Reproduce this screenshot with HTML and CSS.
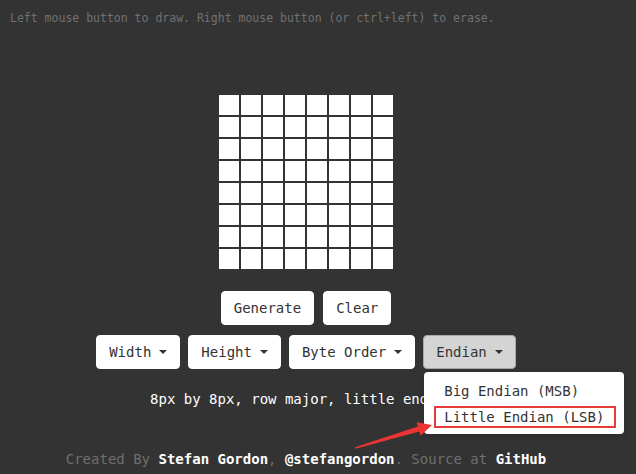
FILE: index.html
```html
<!DOCTYPE html>
<html>
<head>
<meta charset="utf-8">
<link rel="stylesheet" href="styles.css">
</head>
<body>
<p class="hint">Left mouse button to draw. Right mouse button (or ctrl+left) to erase.</p>
<main class="app">
  <div class="grid" id="grid"></div>
  <div class="row row-actions">
    <button class="btn">Generate</button>
    <button class="btn">Clear</button>
  </div>
  <div class="row row-options">
    <button class="btn">Width<span class="caret"></span></button>
    <button class="btn">Height<span class="caret"></span></button>
    <button class="btn">Byte Order<span class="caret"></span></button>
    <div class="dropdown">
      <button class="btn btn-open">Endian<span class="caret"></span></button>
      <ul class="menu">
        <li class="menu-item">Big Endian (MSB)</li>
        <li class="menu-item menu-item-marked">Little Endian (LSB)</li>
      </ul>
    </div>
  </div>
  <p class="info">8px by 8px, row major, little endian.</p>
  <p class="footer">Created By <a class="link">Stefan Gordon</a>, <a class="link">@stefangordon</a>. Source at <a class="link">GitHub</a></p>
</main>
<svg class="arrow" width="636" height="474" viewBox="0 0 636 474">
  <polygon points="355,447.3 355.6,448.7 419.3,431.4 420.6,435.7 432,425 416.6,422.3 417.9,426.6" fill="#ec3434"/>
</svg>
<script>
  var g = document.getElementById('grid');
  for (var i = 0; i < 64; i++) { var c = document.createElement('div'); c.className = 'cell'; g.appendChild(c); }
</script>
</body>
</html>
```
FILE: styles.css
```css
html, body {
  margin: 0;
  padding: 0;
  background: #333333;
  font-family: "DejaVu Sans Mono", "Liberation Mono", monospace;
}

body {
  position: relative;
  width: 636px;
  height: 474px;
  overflow: hidden;
}

.hint {
  margin: 0;
  padding: 11px 10px 0;
  font-size: 11.5px;
  line-height: 14px;
  color: #717171;
}

.app {
  width: 612px;
  display: flex;
  flex-direction: column;
  align-items: center;
}

.grid {
  margin-top: 70px;
  display: grid;
  grid-template-columns: repeat(8, 20px);
  grid-auto-rows: 20px;
  gap: 2px;
}

.cell {
  background: #ffffff;
}

.row {
  display: flex;
  gap: 8px;
}

.row-actions {
  margin-top: 22px;
  gap: 9px;
}

.row-options {
  margin-top: 10px;
}

.btn {
  height: 34px;
  padding: 0 12px;
  border: 1px solid #ffffff;
  border-radius: 4px;
  background: #ffffff;
  color: #333333;
  font-family: "DejaVu Sans Mono", "Liberation Mono", monospace;
  font-size: 14px;
  display: flex;
  align-items: center;
}

.btn-open {
  background: #d4d4d4;
  border-color: #a9a9a9;
}

.caret {
  width: 0;
  height: 0;
  margin-left: 8px;
  border-top: 4px solid #333333;
  border-left: 4px solid transparent;
  border-right: 4px solid transparent;
}

.dropdown {
  position: relative;
}

.menu {
  position: absolute;
  top: 37px;
  left: 1px;
  width: 200px;
  height: 62px;
  box-sizing: border-box;
  margin: 0;
  padding: 6px 0 0;
  list-style: none;
  background: #ffffff;
  border-radius: 4px;
  box-shadow: 0 2px 6px rgba(0, 0, 0, 0.2);
  z-index: 2;
}

.menu-item {
  height: 26px;
  line-height: 26px;
  padding-left: 20px;
  font-size: 14px;
  color: #333333;
  white-space: nowrap;
}

.menu-item-marked {
  margin: 2px 8px 0 10px;
  padding-left: 8px;
  height: 22px;
  line-height: 18px;
  border: 2px solid #e53a3a;
  box-sizing: border-box;
}

.info {
  margin: 20px 0 0;
  line-height: 20px;
  font-size: 14px;
  color: #ffffff;
}

.footer {
  margin: 40px 0 0;
  line-height: 20px;
  font-size: 14px;
  color: #6f6f6f;
}

.link {
  color: #ffffff;
  font-weight: bold;
}

.arrow {
  position: absolute;
  left: 0;
  top: 0;
  z-index: 3;
  pointer-events: none;
}
```
